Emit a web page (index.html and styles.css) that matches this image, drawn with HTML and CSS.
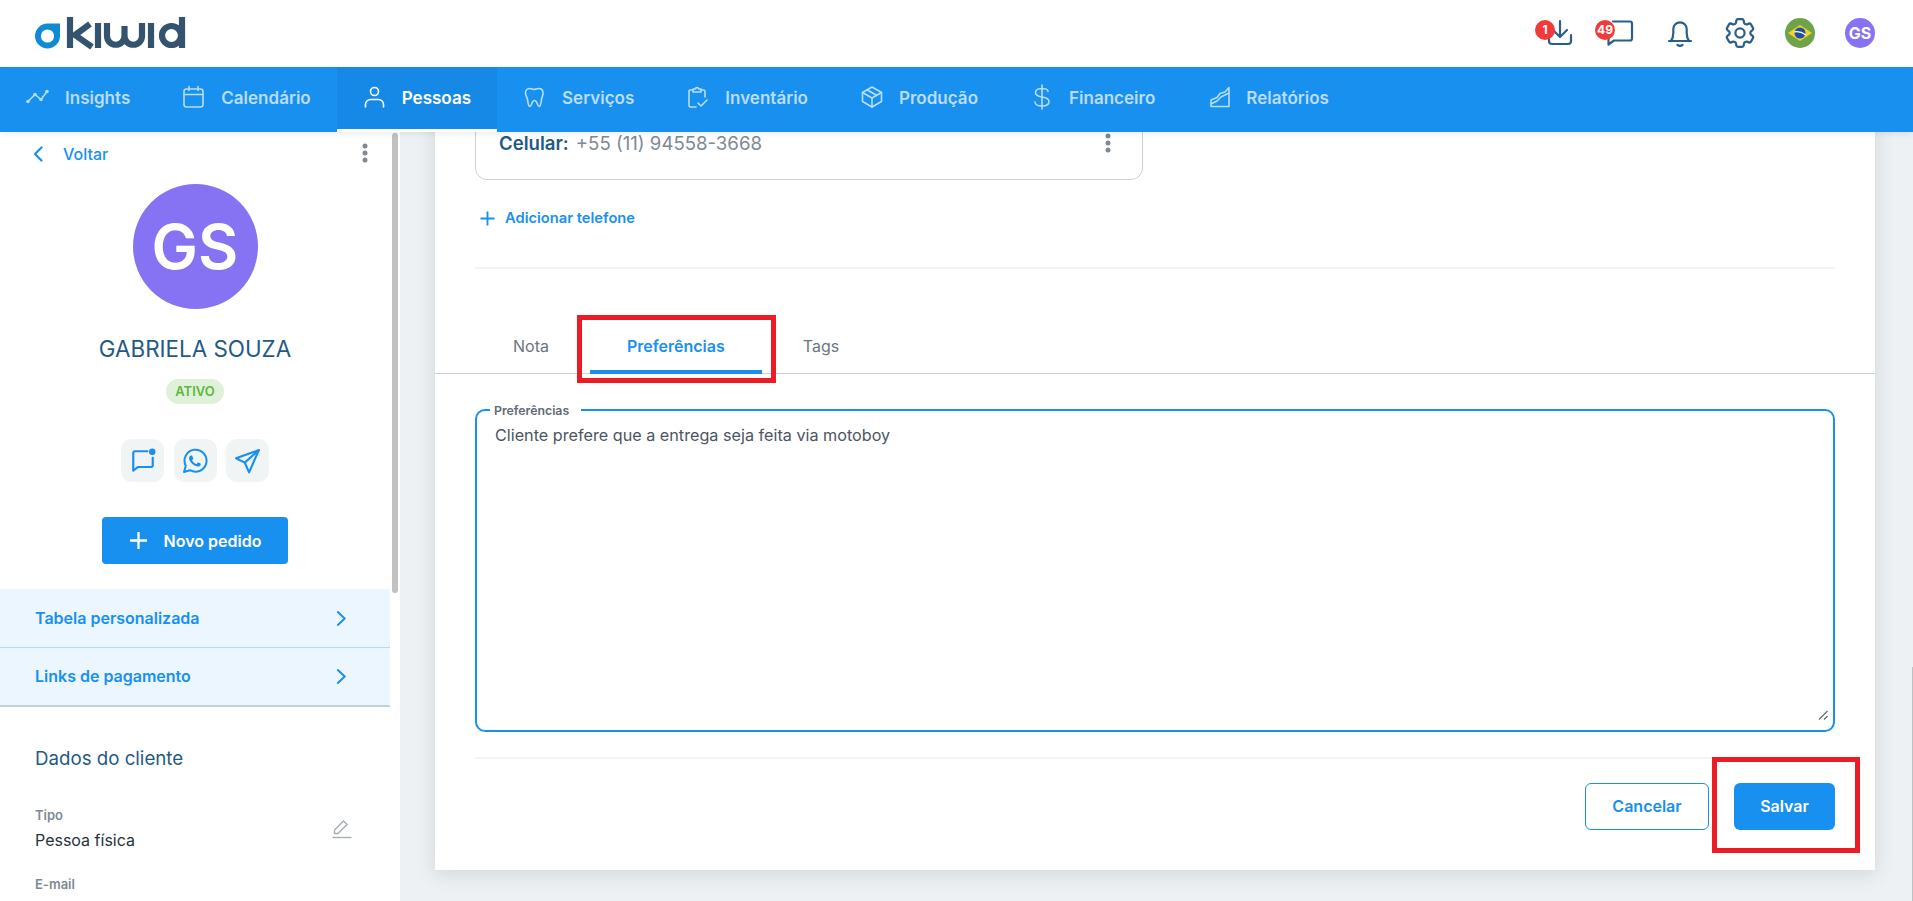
FILE: index.html
```html
<!DOCTYPE html>
<html lang="pt-BR">
<head>
<meta charset="utf-8">
<title>Kiwid - Pessoas</title>
<link rel="stylesheet" href="styles.css">
</head>
<body>
<header class="topbar">
  <svg class="logo" viewBox="0 0 150 31" aria-label="Kiwid">
    <path class="logo-drop" d="M0 19 A12.5 12.5 0 0 1 12.5 6.500 H25 V19 A12.5 12.5 0 0 1 0 19 Z"/>
    <circle class="logo-eye" cx="12.5" cy="19" r="6.600"/>
    <g class="logo-letters">
      <path d="M35 0 V31"/>
      <path d="M55 7 L40 18 L57 30"/>
      <path d="M63 6 V31"/>
      <path d="M72 6 V19 A8.750 8.750 0 0 0 89.500 19 V9 V19 A8.750 8.750 0 0 0 107 19 V6"/>
      <path d="M116 6 V31"/>
      <circle cx="136.500" cy="18.500" r="9.500"/>
      <path d="M147 0 V31"/>
    </g>
  </svg>
  <div class="top-actions">
    <div class="top-icon">
      <span class="badge">1</span>
      <svg viewBox="0 0 30 30"><path d="M4 17v6a3 3 0 0 0 3 3h16a3 3 0 0 0 3-3v-6"/><path d="M15 3v15"/><path d="M8 12l7 7 7-7"/></svg>
    </div>
    <div class="top-icon">
      <span class="badge">49</span>
      <svg viewBox="0 0 30 30"><path d="M8 3.500h17a2 2 0 0 1 2 2v15a2 2 0 0 1-2 2H9l-5.500 4v-6"/></svg>
    </div>
    <div class="top-icon">
      <svg viewBox="0 0 30 30"><path d="M4 23h22"/><path d="M6 23c1.500-2 2.300-4.500 2.300-8v-4a6.700 6.700 0 0 1 13.400 0v4c0 3.500.8 6 2.300 8"/><path d="M12.500 27q2.500 1.800 5 0"/></svg>
    </div>
    <div class="top-icon">
      <svg viewBox="2.200 2.200 19.600 19.600" class="thin"><path d="M9.594 3.940c.09-.542.56-.94 1.110-.94h2.593c.55 0 1.020.398 1.110.94l.213 1.281c.063.374.313.686.645.870.074.04.147.083.22.127.324.196.72.257 1.075.124l1.217-.456a1.125 1.125 0 0 1 1.370.49l1.296 2.247a1.125 1.125 0 0 1-.26 1.431l-1.003.827c-.293.24-.438.613-.431.992a6.759 6.759 0 0 1 0 .255c-.007.378.138.75.43.99l1.005.828c.424.35.534.954.26 1.430l-1.298 2.247a1.125 1.125 0 0 1-1.369.491l-1.217-.456c-.355-.133-.75-.072-1.076.124a6.570 6.570 0 0 1-.22.128c-.331.183-.581.495-.644.869l-.213 1.280c-.09.543-.56.941-1.110.941h-2.594c-.55 0-1.020-.398-1.110-.94l-.213-1.281c-.062-.374-.312-.686-.644-.87a6.520 6.520 0 0 1-.22-.127c-.325-.196-.72-.257-1.076-.124l-1.217.456a1.125 1.125 0 0 1-1.369-.49l-1.297-2.247a1.125 1.125 0 0 1 .26-1.431l1.004-.827c.292-.24.437-.613.43-.992a6.932 6.932 0 0 1 0-.255c.007-.378-.138-.75-.43-.99l-1.004-.828a1.125 1.125 0 0 1-.26-1.430l1.297-2.247a1.125 1.125 0 0 1 1.370-.491l1.216.456c.356.133.751.072 1.076-.124.072-.044.146-.087.22-.128.332-.183.582-.495.644-.869l.214-1.281z"/><circle cx="12" cy="12" r="3"/></svg>
    </div>
    <div class="top-icon">
      <svg viewBox="0 0 30 30" class="flag"><circle cx="15" cy="15" r="15" fill="#6ea34a"/><path d="M15 7L27 15 15 23 3 15z" fill="#f5cf2e"/><circle cx="15" cy="15" r="5.500" fill="#1c4f9c"/><path d="M9.700 13.800q6-.8 10.800 3" fill="none" stroke="#fff" stroke-width="1.300"/></svg>
    </div>
    <div class="top-avatar">GS</div>
  </div>
</header>

<nav class="navbar">
  <a class="nav-item">
    <svg viewBox="0 0 22 22"><path d="M1 15.500l7-7 6 5 6-8"/><circle class="dot" cx="1" cy="15.500" r="1"/><circle class="dot" cx="8" cy="8.500" r="1"/><circle class="dot" cx="14" cy="13.500" r="1"/><circle class="dot" cx="20" cy="5.500" r="1"/></svg>
    <span>Insights</span>
  </a>
  <a class="nav-item">
    <svg viewBox="0 0 22 22"><rect x="1" y="3" width="19" height="18" rx="2.500"/><path d="M1 8.500h19M6 .5v4M15 .5v4"/></svg>
    <span>Calendário</span>
  </a>
  <a class="nav-item active">
    <svg viewBox="0 0 22 22"><circle cx="10.500" cy="5.500" r="4"/><path d="M1.500 21v-2.500a5 5 0 0 1 5-5h8a5 5 0 0 1 5 5V21"/></svg>
    <span>Pessoas</span>
  </a>
  <a class="nav-item">
    <svg viewBox="0 0 22 22"><path d="M5.500 2.500c2 0 3 1 4.500 1s3-1 4.500-1c3 0 4.500 2 4.500 4.500 0 2.500-1 4-1.500 6.500-.4 2.500-.8 7-2.500 7-1.800 0-1.500-6-4.500-6s-2.700 6-4.500 6c-1.700 0-2.100-4.500-2.500-7C3 11 1.500 9.500 1.500 7c0-2.500 1.500-4.500 4-4.500z"/></svg>
    <span>Serviços</span>
  </a>
  <a class="nav-item">
    <svg viewBox="0 0 22 22"><path d="M6 4H3.500A1.500 1.500 0 0 0 2 5.500v14A1.500 1.500 0 0 0 3.500 21H9M14 4h2.500A1.500 1.500 0 0 1 18 5.500V11"/><path d="M6 3h2.500a1.500 1.500 0 0 1 3 0H14v3H6z"/><path d="M11 17l3 3 6-6"/></svg>
    <span>Inventário</span>
  </a>
  <a class="nav-item">
    <svg viewBox="0 0 22 22"><path d="M11 1l9.500 5.500v9L11 21l-9.500-5.500v-9z"/><path d="M1.500 6.500L11 12l9.500-5.500M11 12v9M6 3.800l9.500 5.500"/></svg>
    <span>Produção</span>
  </a>
  <a class="nav-item">
    <svg viewBox="0 0 22 22"><path d="M11 -1v24M17 5.500C17 3 14.500 2.500 11 2.500S4.500 3.500 4.500 6.500 7.500 10.500 11 11s7 1.500 7 4.500-3 4.500-7 4.500-7-1-7-4"/></svg>
    <span>Financeiro</span>
  </a>
  <a class="nav-item">
    <svg viewBox="0 0 22 22"><path d="M3 20.500h18V1.500L17 6l-5 1.500-3 4L3 14z"/><path d="M3 18l6-3 4-4 8-4"/></svg>
    <span>Relatórios</span>
  </a>
</nav>

<div class="workspace">
  <aside class="sidebar">
    <div class="side-scroll"></div>
    <div class="side-inner">
      <div class="back-row">
        <svg class="back-chevron" viewBox="0 0 10 16"><path d="M8.500 1.500L2 8l6.500 6.500"/></svg>
        <span class="back-label">Voltar</span>
        <svg class="kebab" viewBox="0 0 6 20"><circle cx="3" cy="3" r="2.500"/><circle cx="3" cy="10" r="2.500"/><circle cx="3" cy="17" r="2.500"/></svg>
      </div>
      <div class="big-avatar">GS</div>
      <h1 class="client-name">GABRIELA SOUZA</h1>
      <span class="status">ATIVO</span>
      <div class="quick-actions">
        <div class="quick"><svg viewBox="0 0 24 24"><path d="M16 3H4.500A1.500 1.500 0 0 0 3 4.500V21l4.500-3.500H19.500A1.500 1.500 0 0 0 21 16V9"/><circle class="fill" cx="20.500" cy="3.500" r="3"/></svg></div>
        <div class="quick"><svg viewBox="0 0 26 26"><path d="M2 24l1.800-6.200A11 11 0 1 1 8 22.200z"/><path class="fill" d="M9.300 7.500c.5 0 .8 0 1 .6l.9 2.100c.1.3.1.6-.1.800l-.8 1c-.2.2-.2.500 0 .8.800 1.400 2.100 2.500 3.600 3.200.3.100.5.100.7-.1l1-1.200c.2-.3.5-.3.800-.2l2 1c.4.200.5.400.4.800-.2 1.400-1.500 2.300-2.800 2.300-3.900-.4-8.700-4.600-9-8.400-.1-1.200.9-2.700 2.300-2.700z"/></svg></div>
        <div class="quick"><svg viewBox="0 0 24 24"><path d="M22 2L1 9.500l8 4 4 9z"/><path d="M22 2L9 13.500"/></svg></div>
      </div>
      <button class="new-order" type="button">
        <svg viewBox="0 0 20 20"><path d="M10 1v18M1 10h18"/></svg>
        <span>Novo pedido</span>
      </button>
      <div class="side-links">
        <a class="side-link"><span>Tabela personalizada</span><svg viewBox="0 0 12 18"><path d="M2 2l7.500 7L2 16"/></svg></a>
        <a class="side-link"><span>Links de pagamento</span><svg viewBox="0 0 12 18"><path d="M2 2l7.500 7L2 16"/></svg></a>
      </div>
      <h2 class="side-title">Dados do cliente</h2>
      <div class="data-row">
        <div>
          <div class="data-label">Tipo</div>
          <div class="data-value">Pessoa física</div>
        </div>
        <svg class="pencil" viewBox="0 0 20 20"><path d="M2.500 14.500V11L11.500 2l3.500 3.500-9 9z"/><path d="M0.500 18.500h19"/></svg>
      </div>
      <div class="data-label email-label">E-mail</div>
    </div>
  </aside>

  <main class="main">
    <section class="card">
      <div class="phone-card">
        <span class="phone-key">Celular:</span>
        <span class="phone-number">+55 (11) 94558-3668</span>
        <svg class="kebab phone-kebab" viewBox="0 0 6 20"><circle cx="3" cy="3" r="2.500"/><circle cx="3" cy="10" r="2.500"/><circle cx="3" cy="17" r="2.500"/></svg>
      </div>
      <a class="add-phone">
        <svg viewBox="0 0 16 16"><path d="M8 .5v15M.5 8h15"/></svg>
        <span>Adicionar telefone</span>
      </a>
      <hr class="soft-rule rule-top">
      <div class="tabs">
        <div class="tab">Nota</div>
        <div class="tab selected">Preferências<span class="callout callout-tab"></span></div>
        <div class="tab">Tags</div>
      </div>
      <div class="field">
        <label class="field-label" for="prefs">Preferências</label>
        <textarea id="prefs" class="field-input" readonly>Cliente prefere que a entrega seja feita via motoboy</textarea>
        <svg class="field-grip" viewBox="0 0 10 10"><path d="M1 9.500L9.500 1M6 9.500L9.500 6"/></svg>
      </div>
      <hr class="soft-rule rule-bottom">
      <div class="form-actions">
        <button class="btn btn-outline" type="button">Cancelar</button>
        <button class="btn btn-solid" type="button">Salvar<span class="callout callout-save"></span></button>
      </div>
    </section>
  </main>
  <div class="edge-line"></div>
</div>
</body>
</html>
```

FILE: styles.css
```css
* { box-sizing: border-box; }
html, body { height: 100%; }
body {
  margin: 0;
  height: 901px;
  overflow: hidden;
  display: flex;
  flex-direction: column;
  font-family: Inter, "Liberation Sans", sans-serif;
  background: #edf1f3;
}
a { text-decoration: none; }

/* top bar */
.topbar {
  height: 67px;
  flex: none;
  background: #fff;
  display: flex;
  align-items: center;
  justify-content: space-between;
  padding: 0 38px 0 35px;
}
.logo { width: 150px; height: 31px; margin-top: -2px; display: block; overflow: visible; }
.logo-drop { fill: #0f8ad4; }
.logo-eye { fill: #fff; }
.logo-letters { fill: none; stroke: #34536f; stroke-width: 6.2; }
.top-actions { display: flex; gap: 30px; margin-top: -1px; }
.top-icon { position: relative; width: 30px; height: 30px; }
.top-icon svg {
  display: block;
  width: 30px;
  height: 30px;
  fill: none;
  stroke: #2b5f8a;
  stroke-width: 2.2;
  stroke-linecap: round;
  stroke-linejoin: round;
}
.top-icon svg.thin { stroke-width: 1.45; }
.top-icon svg.flag { stroke: none; }
.badge {
  position: absolute;
  left: -10px;
  top: 2px;
  width: 20px;
  height: 20px;
  border-radius: 50%;
  background: #f23a3a;
  color: #fff;
  font-size: 12px;
  font-weight: 700;
  line-height: 20px;
  text-align: center;
  z-index: 1;
}
.top-avatar {
  width: 30px;
  height: 30px;
  border-radius: 50%;
  background: #8673f3;
  color: #fff;
  font-size: 16px;
  font-weight: 700;
  line-height: 30px;
  text-align: center;
}

/* nav */
.navbar {
  height: 65px;
  flex: none;
  background: #1890f0;
  display: flex;
  position: relative;
  z-index: 2;
  box-shadow: 0 2px 6px rgba(0, 0, 0, .08);
}
.nav-item {
  display: flex;
  align-items: center;
  gap: 16px;
  padding: 0 26px 2px 27px;
  color: #b9ddfb;
  font-size: 17.05px;
  font-weight: 600;
  border-bottom: 3px solid transparent;
}
.nav-item svg {
  width: 22px;
  height: 22px;
  flex: none;
  overflow: visible;
  fill: none;
  stroke: currentColor;
  stroke-width: 1.6;
  stroke-linecap: round;
  stroke-linejoin: round;
}
.nav-item .dot { fill: currentColor; }
.nav-item.active {
  background: #1689e6;
  color: #fff;
  border-bottom-color: #fff;
}

/* workspace */
.workspace { flex: 1; min-height: 0; display: flex; position: relative; }
.edge-line {
  position: absolute;
  right: 0;
  top: 535px;
  bottom: 0;
  width: 1px;
  background: #c0c0c0;
}

/* sidebar */
.sidebar {
  width: 400px;
  flex: none;
  background: #fff;
  position: relative;
  overflow: hidden;
}
.side-scroll {
  position: absolute;
  left: 392px;
  top: 1px;
  width: 6px;
  height: 460px;
  border-radius: 3px;
  background: #c1c1c1;
}
.side-inner {
  width: 390px;
  display: flex;
  flex-direction: column;
  align-items: center;
}
.back-row {
  align-self: stretch;
  height: 44px;
  display: flex;
  align-items: center;
  padding: 0 22px 0 33px;
}
.back-chevron {
  width: 10px;
  height: 16px;
  fill: none;
  stroke: #1890f0;
  stroke-width: 2.2;
  stroke-linecap: round;
  stroke-linejoin: round;
}
.back-label {
  margin-left: 20px;
  color: #1890f0;
  font-size: 16px;
  font-weight: 500;
}
.kebab { width: 6px; height: 20px; fill: #7d8a94; }
.back-row .kebab { margin-left: auto; margin-top: -3px; }
.big-avatar {
  width: 125px;
  height: 125px;
  margin-top: 8px;
  border-radius: 50%;
  background: #8673f3;
  color: #fff;
  font-size: 62px;
  font-weight: 600;
  line-height: 125px;
  text-align: center;
}
.client-name {
  margin: 25px 0 0;
  color: #1f5a85;
  font-size: 22.4px;
  font-weight: 400;
  line-height: 30px;
}
.status {
  margin-top: 15px;
  width: 58px;
  height: 25px;
  border-radius: 13px;
  background: #dff1d9;
  color: #5cb83e;
  font-size: 13px;
  font-weight: 600;
  line-height: 24px;
  text-align: center;
}
.quick-actions { display: flex; gap: 9.5px; margin-top: 35px; }
.quick {
  width: 43px;
  height: 43px;
  border-radius: 11px;
  background: #f0f4f5;
  display: flex;
  align-items: center;
  justify-content: center;
}
.quick svg {
  width: 26px;
  height: 26px;
  fill: none;
  stroke: #1890f0;
  stroke-width: 2;
  stroke-linejoin: round;
  stroke-linecap: round;
}
.quick .fill { fill: #1890f0; stroke: none; }
.new-order {
  margin-top: 35px;
  width: 186px;
  height: 47px;
  border: 0;
  border-radius: 4px;
  background: #1890f0;
  color: #fff;
  font: 600 16px Inter, "Liberation Sans", sans-serif;
  display: flex;
  align-items: center;
  justify-content: center;
  gap: 16px;
}
.new-order svg {
  width: 19px;
  height: 19px;
  fill: none;
  stroke: #fff;
  stroke-width: 2.4;
}
.side-links {
  align-self: stretch;
  margin-top: 25px;
  background: #ebf6fe;
  border-bottom: 2px solid #c5d1d8;
}
.side-link {
  height: 58px;
  display: flex;
  align-items: center;
  justify-content: space-between;
  padding: 0 43px 0 35px;
  color: #1890f0;
  font-size: 16px;
  font-weight: 600;
}
.side-link + .side-link { border-top: 1px solid #b6dbf8; padding-bottom: 1px; }
.side-link svg {
  width: 11px;
  height: 17px;
  fill: none;
  stroke: #1890f0;
  stroke-width: 2.2;
  stroke-linecap: round;
  stroke-linejoin: round;
}
.side-title {
  align-self: flex-start;
  margin: 40px 0 0 35px;
  color: #1f5a85;
  font-size: 18.7px;
  font-weight: 400;
  line-height: 24px;
}
.data-row {
  align-self: stretch;
  margin-top: 36px;
  padding: 0 38px 0 35px;
  display: flex;
  align-items: center;
  justify-content: space-between;
}
.data-label {
  color: #7d8a94;
  font-size: 13px;
  font-weight: 600;
  line-height: 16px;
}
.data-value {
  margin-top: 6px;
  color: #26323a;
  font-size: 16px;
  line-height: 22px;
}
.pencil {
  width: 20px;
  height: 20px;
  fill: none;
  stroke: #a4aeb4;
  stroke-width: 1.4;
}
.email-label { align-self: flex-start; margin: 25px 0 0 35px; }

/* main */
.main {
  flex: 1;
  min-width: 0;
  overflow: hidden;
  padding: 0 38px 31px 35px;
  display: flex;
  flex-direction: column;
  justify-content: flex-end;
}
.card {
  flex: none;
  background: #fff;
  padding: 0 40px 40px;
  box-shadow: 0 4px 18px rgba(60, 80, 95, .16);
}
.phone-card {
  height: 74px;
  width: 668px;
  border: 1px solid #c8d2d8;
  border-radius: 12px;
  display: flex;
  align-items: center;
  padding: 0 31px 0 23px;
  font-size: 18.6px;
}
.phone-key { color: #1f5a85; font-weight: 600; }
.phone-number { margin-left: 7px; color: #7d8a94; }
.phone-kebab { margin-left: auto; }
.add-phone {
  margin-top: 28px;
  height: 20px;
  display: flex;
  align-items: center;
  gap: 10px;
  padding-left: 5px;
  color: #1890f0;
  font-size: 14.7px;
  font-weight: 600;
}
.add-phone svg {
  width: 15px;
  height: 15px;
  fill: none;
  stroke: #1890f0;
  stroke-width: 2;
}
.soft-rule { height: 2px; margin: 0; border: 0; background: #f1f4f5; }
.rule-top { margin-top: 39px; }
.rule-bottom { margin-top: 25px; }
.tabs {
  margin: 50px -40px 0;
  height: 55px;
  padding-left: 41px;
  display: flex;
  gap: 4px;
  border-bottom: 1px solid #c8d2d8;
}
.tab {
  position: relative;
  padding: 2px 37px 0;
  display: flex;
  align-items: center;
  color: #6b7680;
  font-size: 16px;
  border-bottom: 4px solid transparent;
  margin-bottom: -1px;
}
.tab.selected {
  color: #1890f0;
  font-weight: 600;
  border-bottom-color: #1890f0;
}
.callout {
  position: absolute;
  border: 5px solid #ed1c24;
  pointer-events: none;
}
.callout-tab { left: -13px; right: -14px; top: -4px; bottom: -13px; }
.callout-save { left: -22px; right: -25px; top: -26px; bottom: -23px; }
.field { position: relative; margin-top: 35px; height: 323px; }
.field-label {
  position: absolute;
  left: 15px;
  top: -5px;
  padding: 0 12px 0 4px;
  background: #fff;
  color: #5f6b75;
  font-size: 12.3px;
  font-weight: 600;
  line-height: 14px;
}
.field-input {
  display: block;
  width: 100%;
  height: 100%;
  border: 2px solid #1890f0;
  border-radius: 10px;
  padding: 13px 18px;
  outline: 0;
  resize: none;
  color: #4b5563;
  font: 400 16.2px/22px Inter, "Liberation Sans", sans-serif;
}
.field-grip {
  position: absolute;
  right: 7px;
  bottom: 12px;
  width: 10px;
  height: 10px;
  fill: none;
  stroke: #5f6b75;
  stroke-width: 1.2;
}
.form-actions {
  margin-top: 24px;
  display: flex;
  justify-content: flex-end;
  gap: 25px;
}
.btn {
  position: relative;
  height: 47px;
  border-radius: 6px;
  padding: 0 0 2px;
  font: 600 16px Inter, "Liberation Sans", sans-serif;
  color: #1890f0;
}
.btn-outline { width: 124px; background: #fff; border: 1px solid #1890f0; }
.btn-solid { width: 101px; background: #1890f0; border: 0; color: #fff; }
```
